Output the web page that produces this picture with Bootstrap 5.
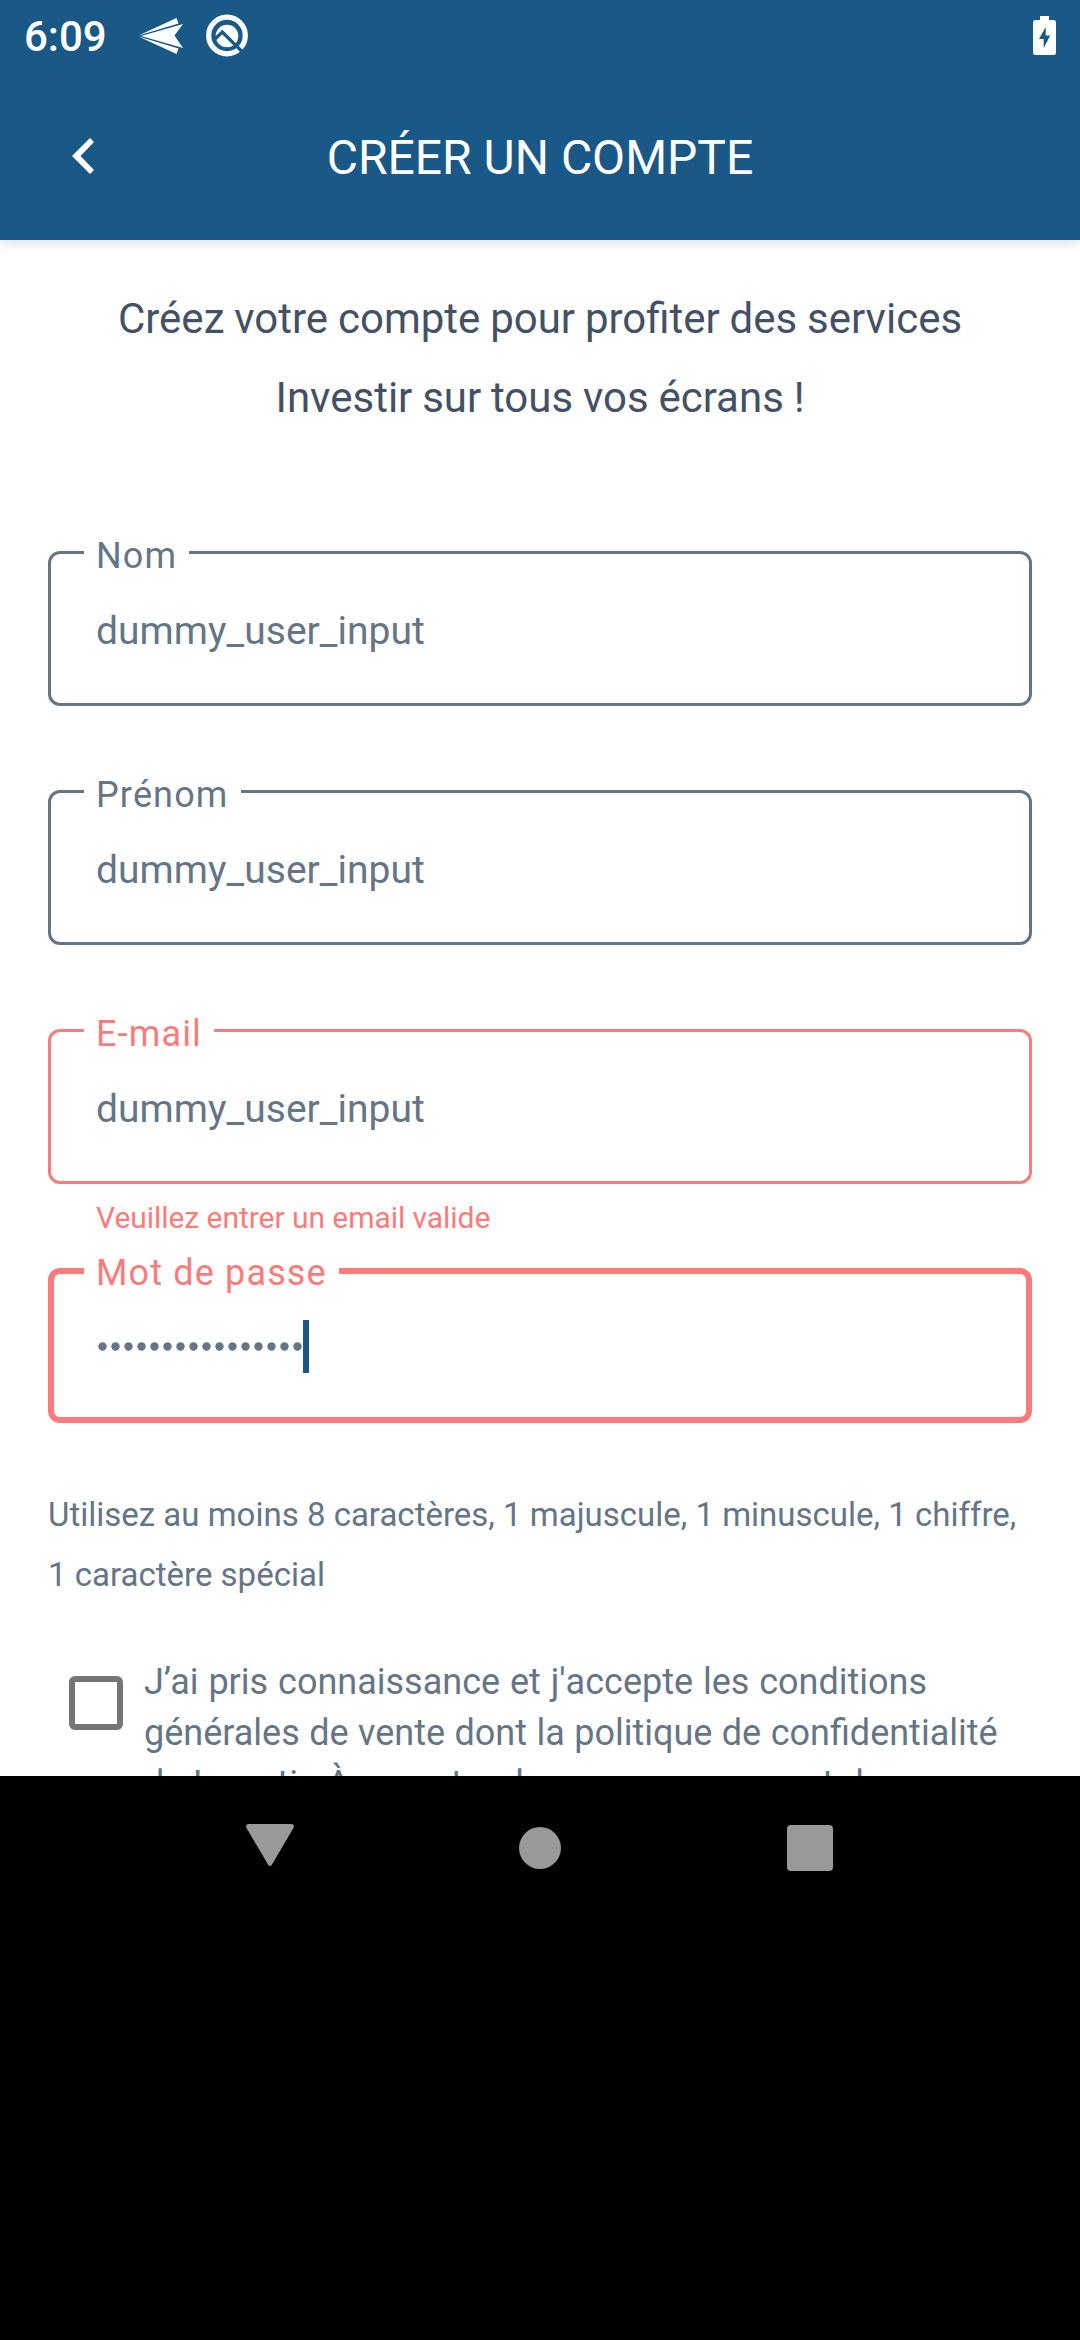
<!DOCTYPE html>
<html lang="fr">
<head>
<meta charset="utf-8">
<meta name="viewport" content="width=device-width, initial-scale=1">
<title>Créer un compte</title>
<link href="https://cdn.jsdelivr.net/npm/bootstrap@5.3.0/dist/css/bootstrap.min.css" rel="stylesheet">
<style>
  :root { --brand: #1a5888; --slate: #667585; --ink: #445164; --danger-soft: #fb7b7a; }
  body { font-family: Roboto, "Liberation Sans", sans-serif; background: #000; color: var(--slate); height: 2340px; }
  svg { display: block; flex: none; }
  .app-head { background: var(--brand); height: 240px; box-shadow: 0 2px 12px rgba(0,0,0,.16); z-index: 2; }
  .status { height: 72px; padding: 0 24px; }
  .clock { font-size: 42px; font-weight: 500; line-height: 74px; padding-top: 1px; width: 114px; }
  .plane { margin-right: 22px; }
  .titlebar { height: 168px; padding: 0 72px; display: grid; grid-template-columns: 22px 1fr 22px; }
  .titlebar h1 { font-size: 48px; line-height: 56px; padding-top: 3px; }
  .screen { height: 1536px; background: #fff; padding: 39px 48px 0; }
  .intro { font-size: 42px; line-height: 79px; word-spacing: -.6px; color: var(--ink); margin-bottom: 114px; }
  .field { height: 155px; border: 3px solid var(--slate); border-radius: 12px; padding: 54px 45px 0; margin-bottom: 84px; }
  .field label { left: 33px; top: -22px; padding: 3px 12px 0; height: 44px; line-height: 42px; font-size: 36px; letter-spacing: 1.15px; background: #fff; white-space: nowrap; }
  .field .entry { font-size: 39px; line-height: 46px; letter-spacing: .04px; }
  .is-wrong { border-color: var(--danger-soft); margin-bottom: 0; }
  .is-wrong label, .error-note { color: var(--danger-soft); }
  .error-note { font-size: 30px; line-height: 36px; height: 84px; padding: 16px 48px 0; letter-spacing: -.05px; }
  .is-active { border-width: 6px; padding: 45px 42px 0; }
  .is-active label { left: 30px; top: -25px; }
  .caret { width: 6px; height: 53px; background: var(--brand); }
  .hint { font-size: 33px; line-height: 60px; margin-top: 62px; }
  .terms { margin-top: 51px; gap: 21px; padding-left: 21px; }
  .tick { width: 54px; height: 54px; border: 6px solid #757575; border-radius: 6px; margin-top: 20px; flex: none; }
  .terms-text { font-size: 36px; line-height: 51px; padding-top: 1px; word-spacing: .5px; white-space: nowrap; }
  .terms-lead { word-spacing: .95px; }
  .unkerned { font-kerning: none; }
  .sysnav { height: 144px; padding-top: 48px; }
</style>
</head>
<body class="m-0 overflow-hidden">
<header class="app-head position-relative text-white">
  <div class="status d-flex align-items-center">
    <div class="clock">6:09</div>
    <svg class="plane" width="46" height="72" viewBox="138 0 46 72" fill="#fff"><path d="M138.500 35.500L176.500 18L178.500 23.500ZM138.500 36.500L176.500 54L178.500 48.500ZM141 36L183 24L174.500 35.500L183 48Z"/></svg>
    <svg width="42" height="72" viewBox="206 0 42 72"><circle cx="227" cy="35.500" r="18.300" fill="none" stroke="#fff" stroke-width="5.200"/><circle cx="227" cy="36" r="11.300" fill="#fff"/><path d="M214.500 39.500L222.300 32L244 53.500" fill="none" stroke="#1a5888" stroke-width="3.300"/></svg>
    <svg class="ms-auto" width="23" height="72" viewBox="1033 0 23 72"><path d="M1040 16h9v4h4.500q2.500 0 2.500 2.500V52.500q0 2.500-2.500 2.500h-18q-2.500 0-2.500-2.500V22.500q0-2.500 2.500-2.500h4.500Z" fill="#fff"/><path d="M1045.700 27v8.500h4.500l-6.500 12.500v-9h-4.700Z" fill="#1a5888"/></svg>
  </div>
  <div class="titlebar align-items-center">
    <svg width="22" height="36" viewBox="0 0 22 36"><path d="M18 0L22 4L8.500 18L22 32L18 36L0 18Z" fill="#fff"/></svg>
    <h1 class="fw-normal text-center m-0">CRÉER UN COMPTE</h1>
  </div>
</header>
<main class="screen overflow-hidden">
  <p class="intro text-center">Créez votre compte pour profiter des services<br>Investir sur tous vos écrans !</p>
  <form>
    <div class="field position-relative"><label class="position-absolute">Nom</label><div class="entry">dummy_user_input</div></div>
    <div class="field position-relative"><label class="position-absolute">Prénom</label><div class="entry">dummy_user_input</div></div>
    <div class="field is-wrong position-relative"><label class="position-absolute">E-mail</label><div class="entry">dummy_user_input</div></div>
    <div class="error-note">Veuillez entrer un email valide</div>
    <div class="field is-wrong is-active position-relative"><label class="position-absolute">Mot de passe</label>
      <div class="d-flex align-items-center">
        <svg width="207" height="54" fill="#667585"><defs><pattern id="dot" width="13" height="54" patternUnits="userSpaceOnUse"><circle cx="6.500" cy="27.500" r="4.200"/></pattern></defs><rect width="207" height="54" fill="url(#dot)"/></svg>
        <span class="caret"></span>
      </div>
    </div>
    <p class="hint mb-0">Utilisez au moins 8 caractères, 1 majuscule, 1 minuscule, 1 chiffre,<br>1 caractère spécial</p>
    <div class="terms d-flex align-items-start">
      <span class="tick"></span>
      <div class="terms-text"><span class="terms-lead">J’ai pris connaissance et <span class="unkerned">j'accepte</span> les conditions</span><br>générales de vente dont la politique de confidentialité<br>de Investir. À compter de mon engagement de</div>
    </div>
  </form>
</main>
<nav class="sysnav d-flex justify-content-center">
  <svg width="590" height="48" viewBox="245 1824 590 48" fill="#999"><path d="M249 1824H291Q295 1824 293.500 1828L272 1864.500Q270 1867.500 268 1864.500L246.500 1828Q245 1824 249 1824Z"/><circle cx="540" cy="1848" r="21"/><rect x="787" y="1825" width="46" height="46" rx="4"/></svg>
</nav>
<script src="https://cdn.jsdelivr.net/npm/bootstrap@5.3.0/dist/js/bootstrap.bundle.min.js"></script>
</body>
</html>
